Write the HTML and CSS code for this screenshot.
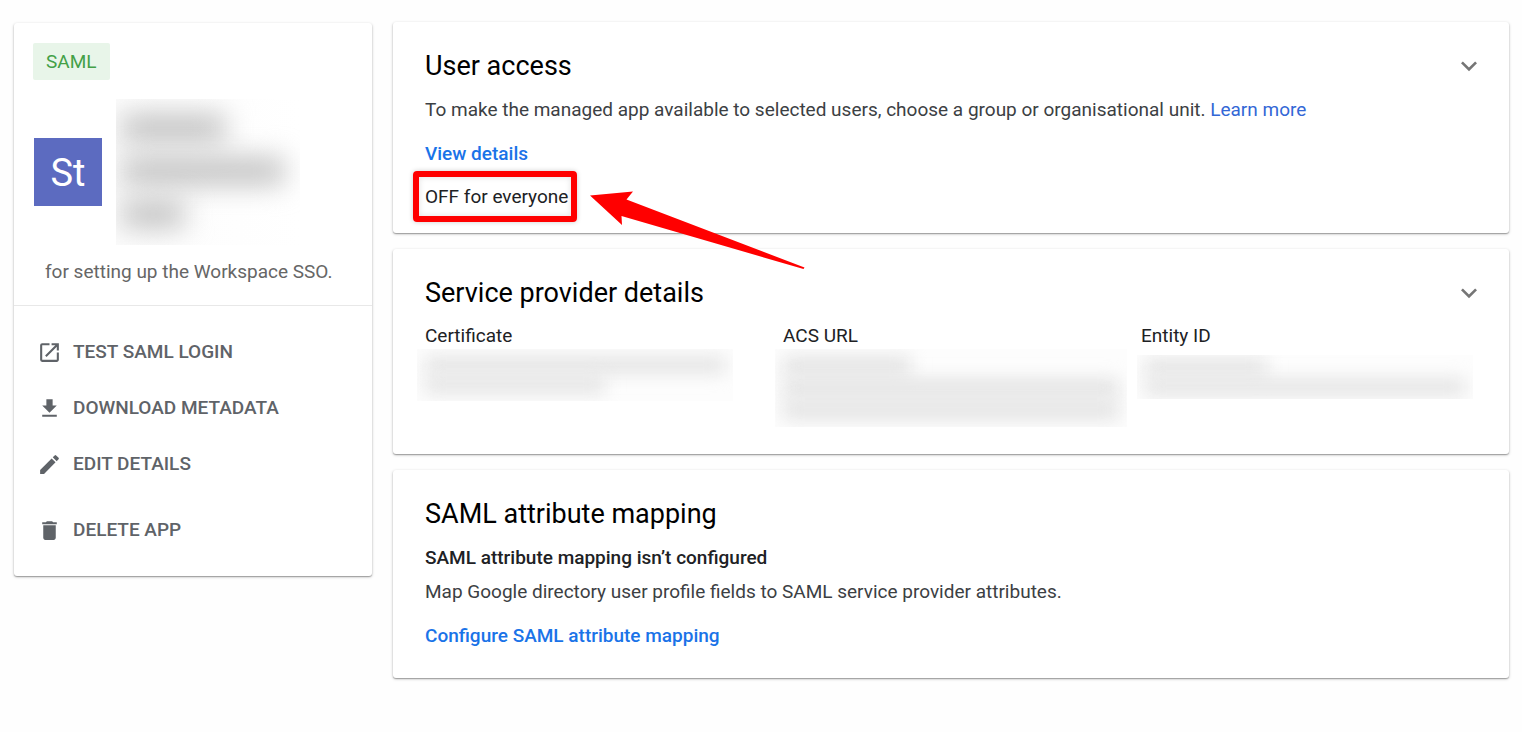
FILE: index.html
```
<!DOCTYPE html>
<html lang="en">
<head>
<meta charset="utf-8">
<title>SAML app details</title>
<link rel="stylesheet" href="styles.css">
</head>
<body>
<div class="page">
  <aside class="card app">
    <div class="app-summary">
      <span class="badge">SAML</span>
      <div class="app-identity">
        <div class="app-logo">St</div>
        <div class="redacted redacted-name" aria-hidden="true">
          <i class="w-60"></i><i class="w-90"></i><i class="w-30"></i>
        </div>
      </div>
      <p class="app-note">for setting up the Workspace SSO.</p>
    </div>
    <div class="actions">
      <button class="action" type="button">
        <svg class="icon" viewBox="0 0 24 24" aria-hidden="true"><path d="M19 19H5V5h7V3H5a2 2 0 0 0-2 2v14a2 2 0 0 0 2 2h14c1.100 0 2-.900 2-2v-7h-2v7zM14 3v2h3.590l-9.830 9.830 1.410 1.410L19 6.410V10h2V3h-7z"/></svg>
        TEST SAML LOGIN
      </button>
      <button class="action" type="button">
        <svg class="icon" viewBox="0 0 24 24" aria-hidden="true"><path d="M19 9h-4V3H9v6H5l7 7 7-7zM5 18v2h14v-2H5z"/></svg>
        DOWNLOAD METADATA
      </button>
      <button class="action" type="button">
        <svg class="icon" viewBox="0 0 24 24" aria-hidden="true"><path d="M3 17.250V21h3.750L17.810 9.940l-3.750-3.750L3 17.250zM20.710 7.040a1 1 0 0 0 0-1.410l-2.340-2.340a1 1 0 0 0-1.410 0l-1.830 1.830 3.750 3.750 1.830-1.830z"/></svg>
        EDIT DETAILS
      </button>
      <button class="action action-delete" type="button">
        <svg class="icon" viewBox="0 0 24 24" aria-hidden="true"><path d="M6 19c0 1.100.9 2 2 2h8c1.100 0 2-.9 2-2V7H6v12zM19 4h-3.500l-1-1h-5l-1 1H5v2h14V4z"/></svg>
        DELETE APP
      </button>
    </div>
  </aside>

  <main class="sections">
    <section class="card section">
      <header class="section-head">
        <h2>User access</h2>
        <button class="expand" type="button" aria-label="Expand user access"><svg class="icon chevron" viewBox="0 0 24 24" aria-hidden="true"><path d="M7.410 8.590 12 13.170l4.590-4.580L18 10l-6 6-6-6z"/></svg></button>
      </header>
      <p class="access-note">To make the managed app available to selected users, choose a group or organisational unit. <a class="learn" href="#">Learn more</a></p>
      <p class="access-link"><a class="link" href="#">View details</a></p>
      <p class="status">OFF for everyone
        <span class="frame"></span>
        <svg class="arrow" viewBox="0 0 216 80" aria-hidden="true"><path d="M0 5.500 43 1.500 36.500 9.500 214.500 77.500 213.500 79 31.500 26 32 35z"/></svg>
      </p>
    </section>

    <section class="card section provider">
      <header class="section-head">
        <h2>Service provider details</h2>
        <button class="expand" type="button" aria-label="Expand service provider details"><svg class="icon chevron" viewBox="0 0 24 24" aria-hidden="true"><path d="M7.410 8.590 12 13.170l4.590-4.580L18 10l-6 6-6-6z"/></svg></button>
      </header>
      <dl class="fields">
        <div class="field"><dt>Certificate</dt><dd class="redacted redacted-cert"><i></i><i class="w-60"></i></dd></div>
        <div class="field"><dt>ACS URL</dt><dd class="redacted redacted-acs"><i class="w-40"></i><i></i><i></i></dd></div>
        <div class="field"><dt>Entity ID</dt><dd class="redacted redacted-entity"><i class="w-40"></i><i></i></dd></div>
      </dl>
    </section>

    <section class="card section mapping">
      <h2>SAML attribute mapping</h2>
      <h3>SAML attribute mapping isn’t configured</h3>
      <p class="mapping-note">Map Google directory user profile fields to SAML service provider attributes.</p>
      <p class="mapping-link"><a class="link" href="#">Configure SAML attribute mapping</a></p>
    </section>
  </main>
</div>
</body>
</html>
```
FILE: styles.css
```
* { box-sizing: border-box; }
body {
  margin: 0;
  background: #fefefe;
  color: #202124;
  font: 19px/24px Roboto, sans-serif;
}
h2, h3, p, dl, dd { margin: 0; }
button {
  border: 0;
  padding: 0;
  background: none;
  font: inherit;
  color: inherit;
  cursor: pointer;
}
a { text-decoration: none; }

.page {
  display: grid;
  grid-template-columns: 358px 1fr;
  gap: 21px;
  align-items: start;
  padding: 22px 13px 22px 14px;
}
.card {
  background: #fff;
  border-radius: 3px;
  box-shadow: 0 1px 1px rgba(0, 0, 0, .24), 0 1px 3px rgba(0, 0, 0, .26);
}
.icon {
  display: block;
  width: 25px;
  height: 25px;
  fill: currentColor;
}
.chevron {
  width: 32px;
  height: 32px;
}

/* App card */
.app { margin-top: 1px; }
.app-summary {
  padding: 20px 19px 21px;
  border-bottom: 1px solid #e8e8e8;
}
.badge {
  display: inline-block;
  padding: 7px 13px 6px;
  border-radius: 2px;
  background: #e8f5e9;
  color: #43a047;
}
.app-identity {
  display: flex;
  align-items: center;
  gap: 14px;
  padding: 19px 1px 15px;
}
.app-logo {
  width: 68px;
  height: 68px;
  background: #5c6bc0;
  color: #fff;
  font-size: 38px;
  line-height: 70px;
  text-align: center;
}
.app-note {
  padding-left: 12px;
  color: #666;
}
.actions {
  display: flex;
  flex-direction: column;
  gap: 24px;
  padding: 30px 23px;
}
.action {
  display: flex;
  align-items: center;
  gap: 11px;
  height: 32px;
  color: #5f6368;
  font-weight: 500;
  text-align: left;
}
.action-delete { margin-top: 10px; }

/* Obscured values */
.redacted {
  display: flex;
  flex-direction: column;
  overflow: hidden;
  background: #fdfdfd;
}
.redacted i {
  display: block;
  filter: blur(9px);
  background: #e2e2e2;
}
.redacted .w-30 { width: 36%; }
.redacted .w-40 { width: 38%; }
.redacted .w-60 { width: 60%; }
.redacted .w-90 { width: 94%; }
.redacted-name {
  width: 184px;
  height: 146px;
  gap: 17px;
  padding: 16px 6px;
  background: linear-gradient(to right, #fcfcfc, #fff);
}
.redacted-name i {
  height: 26px;
  background: #bebebe;
  filter: blur(14px);
}
.redacted-cert,
.redacted-acs,
.redacted-entity {
  gap: 4px;
  margin: 1px 8px 0 -8px;
  padding: 8px;
}
.redacted-cert { margin-right: 28px; }
.redacted-cert i { height: 16px; }
.redacted-acs { margin-right: -8px; }
.redacted-acs i { height: 18px; }
.redacted-entity {
  margin: 7px 4px 0 -4px;
  padding: 4px 8px;
}
.redacted-entity i { height: 16px; }

/* Sections */
.sections {
  display: flex;
  flex-direction: column;
  gap: 16px;
}
.section { padding: 28px 32px 24px; }
.section-head {
  display: flex;
  align-items: center;
  justify-content: space-between;
}
h2 {
  color: #000;
  font-size: 27px;
  font-weight: 400;
  line-height: 32px;
}
h3 {
  margin-top: 16px;
  font-size: 19px;
  font-weight: 500;
  line-height: 24px;
}
.expand {
  margin-right: -8px;
  color: #757575;
}
.link {
  color: #1a73e8;
  font-weight: 500;
}
.learn { color: #3367d6; }
.access-note {
  margin-top: 16px;
  color: #3c4043;
}
.access-link { margin-top: 20px; }
.status {
  position: relative;
  width: max-content;
  margin-top: 19px;
}
.frame {
  position: absolute;
  inset: -14px -9px -13px -12px;
  border: 6px solid #f00;
  border-radius: 4px;
  box-shadow: 0 0 5px rgba(0, 0, 0, .2), inset 0 0 6px rgba(0, 0, 0, .12);
}
.arrow {
  position: absolute;
  z-index: 1;
  top: 5px;
  left: 165px;
  width: 216px;
  height: 80px;
  fill: #f00;
}
.provider { padding-bottom: 27px; }
.fields {
  display: grid;
  grid-template-columns: repeat(3, 1fr);
  gap: 22px;
  margin-top: 15px;
}
.mapping { padding-bottom: 30px; }
.mapping-note {
  margin-top: 10px;
  color: #3c4043;
}
.mapping-link { margin-top: 20px; }
```
